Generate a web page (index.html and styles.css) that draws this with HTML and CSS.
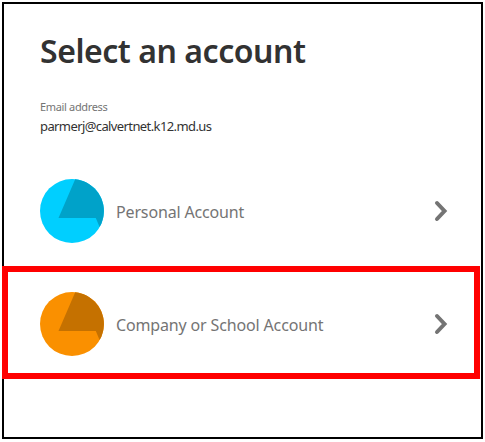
FILE: index.html
```html
<!DOCTYPE html>
<html lang="en">
<head>
<meta charset="utf-8">
<title>Select an account</title>
<link rel="stylesheet" href="styles.css">
</head>
<body>
<main class="panel">
  <header class="intro">
    <h1 class="title">Select an account</h1>
    <div class="label">Email address</div>
    <div class="email">parmerj@calvertnet.k12.md.us</div>
  </header>
  <div class="account personal">
    <svg class="avatar" viewBox="0 0 64 64"><circle class="disc" cx="32" cy="32" r="32"/><path class="shade" d="M35.2 .2A32 32 0 0 1 59.6 48L55.8 39H18.5Z"/></svg>
    <span class="name">Personal Account</span>
    <svg class="chevron" viewBox="0 0 14 22"><path d="M3 3L10.5 11L3 19"/></svg>
  </div>
  <div class="account school">
    <svg class="avatar" viewBox="0 0 64 64"><circle class="disc" cx="32" cy="32" r="32"/><path class="shade" d="M35.2 .2A32 32 0 0 1 59.6 48L55.8 39H18.5Z"/></svg>
    <span class="name">Company or School Account</span>
    <svg class="chevron" viewBox="0 0 14 22"><path d="M3 3L10.5 11L3 19"/></svg>
  </div>
</main>
</body>
</html>
```
FILE: styles.css
```css
* { box-sizing: border-box; }
body { margin: 0; padding: 2px; background: #fff; font-family: "Noto Sans", "Open Sans", sans-serif; }
.panel { width: 481px; height: 437px; border: 2px solid #000; }
.intro { height: 151px; padding: 25px 0 0 36px; white-space: nowrap; }
.title { margin: 0; font-size: 32px; line-height: 44px; font-weight: 600; color: #323232; letter-spacing: -0.46px; }
.label { margin-top: 26px; font-size: 11px; line-height: 16px; color: #747474; letter-spacing: -0.34px; }
.email { margin-top: 1px; font-size: 13px; line-height: 20px; color: #323232; letter-spacing: -0.6px; }
.account { display: flex; align-items: center; height: 112px; white-space: nowrap; }
.avatar { width: 64px; height: 64px; flex: none; }
.name { flex: 1; margin-left: 12px; padding-top: 2px; font-size: 16px; line-height: 24px; color: #747474; letter-spacing: -0.15px; }
.chevron { width: 14px; height: 22px; flex: none; fill: none; stroke: #747474; stroke-width: 4; stroke-linecap: round; stroke-linejoin: miter; }
.personal { padding: 0 33px 0 36px; }
.personal .disc { fill: #00cfff; }
.personal .shade { fill: #00a2c9; }
.school { width: 478px; height: 113px; margin: -1px 0 0 -2px; padding: 3px 26px 0 32px; border: 6px solid #f00; position: relative; }
.school .disc { fill: #fa9000; }
.school .shade { fill: #c57100; }
```
